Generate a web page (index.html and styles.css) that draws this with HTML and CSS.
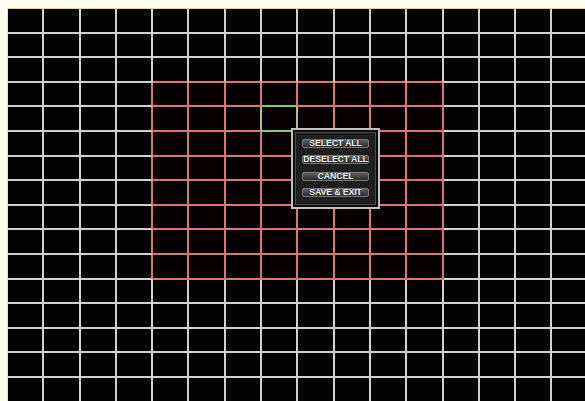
FILE: index.html
```html
<!DOCTYPE html>
<html>
<head>
<meta charset="utf-8">
<link rel="stylesheet" href="styles.css">
</head>
<body>
<div class="frame">
  <div class="grid">
    <i class="c"></i><i class="c"></i><i class="c"></i><i class="c"></i><i class="c"></i><i class="c"></i><i class="c"></i><i class="c"></i><i class="c"></i><i class="c"></i><i class="c"></i><i class="c"></i><i class="c"></i><i class="c"></i><i class="c"></i><i class="c"></i>
    <i class="c"></i><i class="c"></i><i class="c"></i><i class="c"></i><i class="c"></i><i class="c"></i><i class="c"></i><i class="c"></i><i class="c"></i><i class="c"></i><i class="c"></i><i class="c"></i><i class="c"></i><i class="c"></i><i class="c"></i><i class="c"></i>
    <i class="c"></i><i class="c"></i><i class="c"></i><i class="c"></i><i class="c t"></i><i class="c t"></i><i class="c t"></i><i class="c t"></i><i class="c t"></i><i class="c t"></i><i class="c t"></i><i class="c t"></i><i class="c"></i><i class="c"></i><i class="c"></i><i class="c"></i>
    <i class="c"></i><i class="c"></i><i class="c"></i><i class="c l"></i><i class="c s"></i><i class="c s"></i><i class="c s"></i><i class="c s gt"></i><i class="c s"></i><i class="c s"></i><i class="c s"></i><i class="c s"></i><i class="c"></i><i class="c"></i><i class="c"></i><i class="c"></i>
    <i class="c"></i><i class="c"></i><i class="c"></i><i class="c l"></i><i class="c s"></i><i class="c s"></i><i class="c s gl"></i><i class="c s gc"></i><i class="c s"></i><i class="c s"></i><i class="c s"></i><i class="c s"></i><i class="c"></i><i class="c"></i><i class="c"></i><i class="c"></i>
    <i class="c"></i><i class="c"></i><i class="c"></i><i class="c l"></i><i class="c s"></i><i class="c s"></i><i class="c s"></i><i class="c s"></i><i class="c s"></i><i class="c s"></i><i class="c s"></i><i class="c s"></i><i class="c"></i><i class="c"></i><i class="c"></i><i class="c"></i>
    <i class="c"></i><i class="c"></i><i class="c"></i><i class="c l"></i><i class="c s"></i><i class="c s"></i><i class="c s"></i><i class="c s"></i><i class="c s"></i><i class="c s"></i><i class="c s"></i><i class="c s"></i><i class="c"></i><i class="c"></i><i class="c"></i><i class="c"></i>
    <i class="c"></i><i class="c"></i><i class="c"></i><i class="c l"></i><i class="c s"></i><i class="c s"></i><i class="c s"></i><i class="c s"></i><i class="c s"></i><i class="c s"></i><i class="c s"></i><i class="c s"></i><i class="c"></i><i class="c"></i><i class="c"></i><i class="c"></i>
    <i class="c"></i><i class="c"></i><i class="c"></i><i class="c l"></i><i class="c s"></i><i class="c s"></i><i class="c s"></i><i class="c s"></i><i class="c s"></i><i class="c s"></i><i class="c s"></i><i class="c s"></i><i class="c"></i><i class="c"></i><i class="c"></i><i class="c"></i>
    <i class="c"></i><i class="c"></i><i class="c"></i><i class="c l"></i><i class="c s"></i><i class="c s"></i><i class="c s"></i><i class="c s"></i><i class="c s"></i><i class="c s"></i><i class="c s"></i><i class="c s"></i><i class="c"></i><i class="c"></i><i class="c"></i><i class="c"></i>
    <i class="c"></i><i class="c"></i><i class="c"></i><i class="c l"></i><i class="c s"></i><i class="c s"></i><i class="c s"></i><i class="c s"></i><i class="c s"></i><i class="c s"></i><i class="c s"></i><i class="c s"></i><i class="c"></i><i class="c"></i><i class="c"></i><i class="c"></i>
    <i class="c"></i><i class="c"></i><i class="c"></i><i class="c"></i><i class="c"></i><i class="c"></i><i class="c"></i><i class="c"></i><i class="c"></i><i class="c"></i><i class="c"></i><i class="c"></i><i class="c"></i><i class="c"></i><i class="c"></i><i class="c"></i>
    <i class="c"></i><i class="c"></i><i class="c"></i><i class="c"></i><i class="c"></i><i class="c"></i><i class="c"></i><i class="c"></i><i class="c"></i><i class="c"></i><i class="c"></i><i class="c"></i><i class="c"></i><i class="c"></i><i class="c"></i><i class="c"></i>
    <i class="c"></i><i class="c"></i><i class="c"></i><i class="c"></i><i class="c"></i><i class="c"></i><i class="c"></i><i class="c"></i><i class="c"></i><i class="c"></i><i class="c"></i><i class="c"></i><i class="c"></i><i class="c"></i><i class="c"></i><i class="c"></i>
    <i class="c"></i><i class="c"></i><i class="c"></i><i class="c"></i><i class="c"></i><i class="c"></i><i class="c"></i><i class="c"></i><i class="c"></i><i class="c"></i><i class="c"></i><i class="c"></i><i class="c"></i><i class="c"></i><i class="c"></i><i class="c"></i>
    <i class="c"></i><i class="c"></i><i class="c"></i><i class="c"></i><i class="c"></i><i class="c"></i><i class="c"></i><i class="c"></i><i class="c"></i><i class="c"></i><i class="c"></i><i class="c"></i><i class="c"></i><i class="c"></i><i class="c"></i><i class="c"></i>
  </div>
  <div class="menu">
    <button class="btn">SELECT ALL</button>
    <button class="btn">DESELECT ALL</button>
    <button class="btn">CANCEL</button>
    <button class="btn">SAVE &amp; EXIT</button>
  </div>
</div>
</body>
</html>
```
FILE: styles.css
```css
html, body {
  margin: 0;
  padding: 0;
  width: 585px;
  height: 401px;
  overflow: hidden;
  background: #fffdf0;
}

body {
  padding: 8px 0 0 7px;
  box-sizing: border-box;
}

.frame {
  position: relative;
  border-top: 1px solid #eedc5a;
  border-left: 1px solid #f2eaa0;
  background: #020202;
  width: 600px;
  height: 400px;
}

.grid {
  display: grid;
  grid-template-columns: repeat(16, 36.3px);
  grid-template-rows: repeat(16, 24.6px);
}

.c {
  display: block;
  box-sizing: border-box;
  border-right: 2px solid #d0d0d0;
  border-bottom: 2px solid #d0d0d0;
}

.t {
  border-bottom-color: #dc7676;
}

.l {
  border-right-color: #dc7676;
}

.s {
  border-color: #dc7676;
  background: #060000;
}

.gt {
  border-bottom-color: #8cc872;
}

.gl {
  border-right-color: #b8bc88;
}

.gc {
  border-bottom-color: #8cc872;
  border-right-color: #b8bc88;
}

.menu {
  position: absolute;
  left: 283px;
  top: 119px;
  width: 89px;
  height: 81px;
  box-sizing: border-box;
  border: 2px solid #c0c0c0;
  background: #1e1e1e;
  box-shadow: inset 0 0 0 2px #0e0e0e, inset 0 0 0 3px #4a4a4a;
  padding-top: 9px;
  display: flex;
  flex-direction: column;
  align-items: center;
  gap: 7.3px;
}

.btn {
  width: 67px;
  height: 9px;
  margin: 0;
  padding: 0;
  box-sizing: border-box;
  border: 1px solid #7a7a7a;
  border-radius: 2px;
  background: linear-gradient(#5e5e5e, #2c2c2c);
  color: #f4f4f4;
  font-family: "Liberation Sans", Arial, sans-serif;
  font-weight: bold;
  font-size: 8.8px;
  line-height: 7px;
  letter-spacing: -0.15px;
  white-space: nowrap;
  text-shadow: 0 0 1px #000;
  overflow: visible;
  display: flex;
  align-items: center;
  justify-content: center;
}
```
